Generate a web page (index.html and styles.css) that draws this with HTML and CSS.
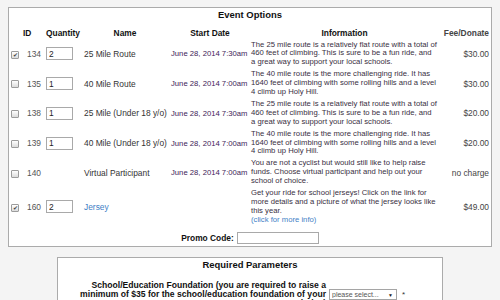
FILE: index.html
```html
<!DOCTYPE html>
<html lang="en">
<head>
    <meta charset="UTF-8">
    <meta name="viewport" content="width=device-width, initial-scale=1.0">
    <title>Event Registration</title>
    <link rel="stylesheet" href="styles.css">
</head>
<body>
    <div class="panel">
        <h2 class="panel-title">Event Options</h2>
        <table class="events">
            <colgroup>
                <col class="c-pick">
                <col class="c-id">
                <col class="c-qty">
                <col class="c-name">
                <col class="c-date">
                <col class="c-info">
                <col class="c-fee">
            </colgroup>
            <thead>
                <tr>
                    <th></th>
                    <th class="left">ID</th>
                    <th class="left">Quantity</th>
                    <th>Name</th>
                    <th>Start Date</th>
                    <th>Information</th>
                    <th class="fee">Fee/Donate</th>
                </tr>
            </thead>
            <tbody>
                <tr>
                    <td class="pick-cell"><input type="checkbox" class="pick" checked></td>
                    <td class="id">134</td>
                    <td><input type="text" class="qty" value="2"></td>
                    <td class="name">25 Mile Route</td>
                    <td class="date">June 28, 2014 7:30am</td>
                    <td class="info">The 25 mile route is a relatively flat route with a total of 460 feet of climbing. This is sure to be a fun ride, and a great way to support your local schools.</td>
                    <td class="fee">$30.00</td>
                </tr>
                <tr>
                    <td class="pick-cell"><input type="checkbox" class="pick"></td>
                    <td class="id">135</td>
                    <td><input type="text" class="qty" value="1"></td>
                    <td class="name">40 Mile Route</td>
                    <td class="date">June 28, 2014 7:00am</td>
                    <td class="info">The 40 mile route is the more challenging ride. It has 1640 feet of climbing with some rolling hills and a level 4 climb up Holy Hill.</td>
                    <td class="fee">$30.00</td>
                </tr>
                <tr>
                    <td class="pick-cell"><input type="checkbox" class="pick"></td>
                    <td class="id">138</td>
                    <td><input type="text" class="qty" value="1"></td>
                    <td class="name">25 Mile (Under 18 y/o)</td>
                    <td class="date">June 28, 2014 7:30am</td>
                    <td class="info">The 25 mile route is a relatively flat route with a total of 460 feet of climbing. This is sure to be a fun ride, and a great way to support your local schools.</td>
                    <td class="fee">$20.00</td>
                </tr>
                <tr>
                    <td class="pick-cell"><input type="checkbox" class="pick"></td>
                    <td class="id">139</td>
                    <td><input type="text" class="qty" value="1"></td>
                    <td class="name">40 Mile (Under 18 y/o)</td>
                    <td class="date">June 28, 2014 7:00am</td>
                    <td class="info">The 40 mile route is the more challenging ride. It has 1640 feet of climbing with some rolling hills and a level 4 climb up Holy Hill.</td>
                    <td class="fee">$20.00</td>
                </tr>
                <tr>
                    <td class="pick-cell"><input type="checkbox" class="pick"></td>
                    <td class="id">140</td>
                    <td></td>
                    <td class="name">Virtual Participant</td>
                    <td class="date">June 28, 2014 7:00am</td>
                    <td class="info">You are not a cyclist but would still like to help raise funds. Choose virtual participant and help out your school of choice.</td>
                    <td class="fee">no charge</td>
                </tr>
                <tr>
                    <td class="pick-cell"><input type="checkbox" class="pick" checked></td>
                    <td class="id">160</td>
                    <td><input type="text" class="qty" value="2"></td>
                    <td class="name"><a href="#">Jersey</a></td>
                    <td class="date"></td>
                    <td class="info">Get your ride for school jerseys! Click on the link for more details and a picture of what the jersey looks like this year.<br><a href="#">(click for more info)</a></td>
                    <td class="fee">$49.00</td>
                </tr>
            </tbody>
        </table>
        <div class="promo">
            <label for="promo">Promo Code:</label>
            <input type="text" id="promo" class="promo-input">
        </div>
    </div>

    <div class="panel panel-small">
        <h2 class="panel-title">Required Parameters</h2>
        <div class="param">
            <label for="school">School/Education Foundation (you are required to raise a minimum of $35 for the school/education foundation of your choice)</label>
            <span class="select-wrap">
                <select id="school">
                    <option value="">please select...</option>
                </select>
            </span>
            <span class="req">*</span>
        </div>
    </div>
</body>
</html>
```

FILE: styles.css
```css
body {
    margin: 7px 8px;
    background-color: #f4f4f4;
    font-family: "Liberation Sans", Arial, sans-serif;
    font-size: 8.4px;
    color: #333;
}
a {
    color: #3f7fc6;
    text-decoration: none;
}
.panel {
    background-color: #fff;
    border: 1px solid #ababab;
}
.panel-title {
    margin: 0;
    font-size: 9.45px;
    line-height: 14px;
    text-align: center;
    color: #111;
}
.events {
    width: 100%;
    border-collapse: collapse;
    table-layout: fixed;
}
.c-pick { width: 12px; }
.c-id { width: 23px; }
.c-qty { width: 36px; }
.c-name { width: 90px; }
.c-date { width: 80px; }
.c-info { width: 189px; }
.c-fee { width: 52px; }
.events th {
    padding: 5px 2px 0;
    font-size: 8.4px;
    line-height: 12px;
    color: #111;
    text-align: center;
    white-space: nowrap;
}
.events th.left {
    text-align: left;
}
.events td {
    padding: 1.5px 2px;
    vertical-align: middle;
    white-space: nowrap;
}
.events .pick-cell {
    padding: 0;
    text-align: center;
}
.pick {
    appearance: none;
    box-sizing: border-box;
    width: 8px;
    height: 8px;
    margin: 0;
    border: 1px solid #9c9c9c;
    border-radius: 1px;
    background: linear-gradient(#fff, #dcdcdc);
    vertical-align: middle;
    display: inline-block;
    text-align: center;
}
.pick:checked::after {
    content: "\2714";
    display: block;
    font-size: 6px;
    line-height: 6px;
    color: #444;
}
.events td.id {
    padding-left: 6px;
    color: #555;
}
.qty {
    box-sizing: border-box;
    width: 27px;
    height: 13px;
    margin: 0;
    padding: 0 2px;
    border: 1px solid #a9a9a9;
    font-family: "Liberation Sans", Arial, sans-serif;
    font-size: 8.4px;
    color: #222;
}
.events td.name {
    padding-left: 4px;
    color: #333;
}
.events td.date {
    padding-left: 1px;
    font-size: 7.7px;
    color: #3e2358;
}
.events td.info {
    padding-left: 1px;
    font-size: 7.7px;
    line-height: 8.9px;
    color: #392f42;
    white-space: normal;
}
.events .fee {
    text-align: right;
    color: #444;
}
.promo {
    display: flex;
    justify-content: center;
    align-items: center;
    gap: 3px;
    padding: 6px 0 2px;
}
.promo label {
    font-weight: bold;
    color: #111;
}
.promo-input {
    box-sizing: border-box;
    width: 82px;
    height: 12px;
    margin: 0;
    border: 1px solid #a9a9a9;
}
.panel-small {
    width: 384px;
    margin: 10px auto 0;
}
.param {
    display: flex;
    align-items: center;
    padding: 8.5px 0 4px 16px;
}
.param label {
    width: 252px;
    font-size: 8.6px;
    line-height: 9px;
    font-weight: bold;
    color: #111;
    text-align: right;
}
.select-wrap {
    position: relative;
    display: inline-block;
    margin-left: 3px;
}
.select-wrap select {
    appearance: none;
    box-sizing: border-box;
    width: 68px;
    height: 11px;
    margin: 0;
    padding: 0 0 0 2px;
    border: 1px solid #a5a5a5;
    background-color: #fff;
    font-family: "Liberation Sans", Arial, sans-serif;
    font-size: 7px;
    color: #555;
    display: block;
}
.select-wrap::after {
    content: "\25BC";
    position: absolute;
    right: 4px;
    top: 3px;
    font-size: 5px;
    color: #222;
}
.req {
    margin-left: 5px;
    font-size: 8px;
    color: #333;
}
```
